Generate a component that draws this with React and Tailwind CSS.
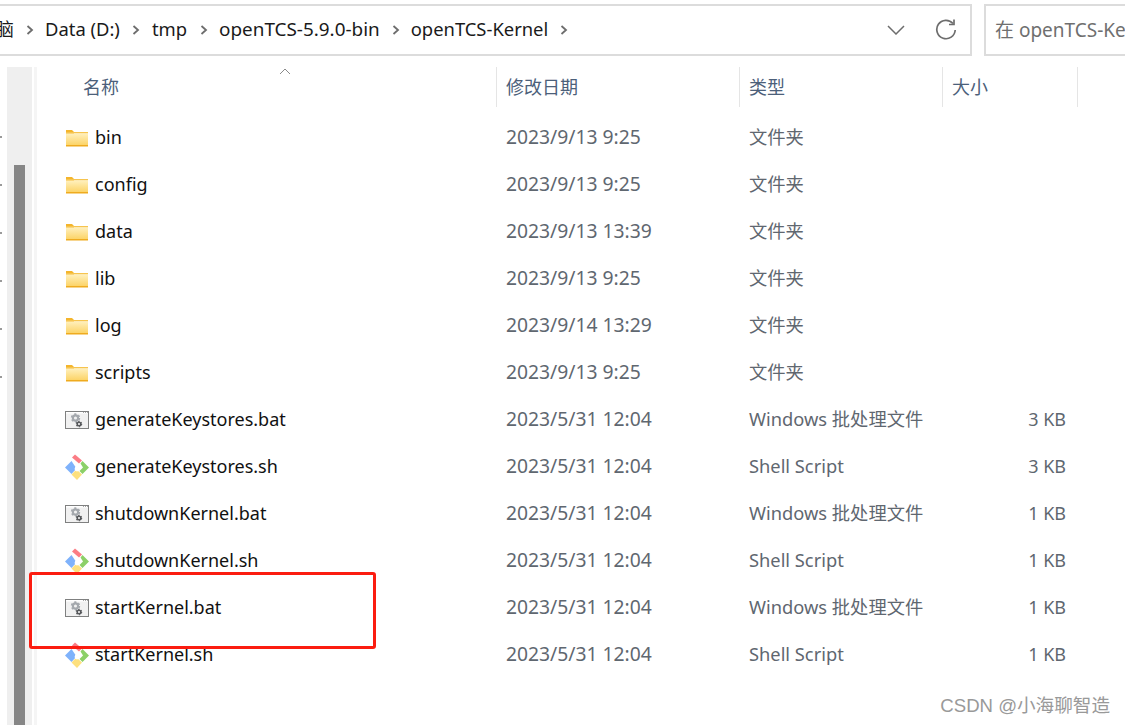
const FONT = "font-['Noto_Sans','Noto_Sans_CJK_SC',sans-serif]";

const rows = [
  ["bin", "2023/9/13 9:25", "文件夹", "", "folder"],
  ["config", "2023/9/13 9:25", "文件夹", "", "folder"],
  ["data", "2023/9/13 13:39", "文件夹", "", "folder"],
  ["lib", "2023/9/13 9:25", "文件夹", "", "folder"],
  ["log", "2023/9/14 13:29", "文件夹", "", "folder"],
  ["scripts", "2023/9/13 9:25", "文件夹", "", "folder"],
  ["generateKeystores.bat", "2023/5/31 12:04", "Windows 批处理文件", "3 KB", "bat"],
  ["generateKeystores.sh", "2023/5/31 12:04", "Shell Script", "3 KB", "git"],
  ["shutdownKernel.bat", "2023/5/31 12:04", "Windows 批处理文件", "1 KB", "bat"],
  ["shutdownKernel.sh", "2023/5/31 12:04", "Shell Script", "1 KB", "git"],
  ["startKernel.bat", "2023/5/31 12:04", "Windows 批处理文件", "1 KB", "bat"],
  ["startKernel.sh", "2023/5/31 12:04", "Shell Script", "1 KB", "git"],
];

function FolderIcon() {
  return (
    <svg width="24" height="18" viewBox="0 0 24 18">
      <defs>
        <linearGradient id="fg" x1="0" y1="0" x2="0" y2="1">
          <stop offset="0" stopColor="#fff0bd" />
          <stop offset="1" stopColor="#fcd468" />
        </linearGradient>
      </defs>
      <path d="M1 1 H7 L9 3 V5 H1 Z" fill="#f4b52c" />
      <rect x="1" y="3" width="22" height="1.5" fill="#f6c44e" />
      <rect x="1" y="4.5" width="22" height="11.5" fill="url(#fg)" />
      <rect x="1" y="16" width="22" height="1.5" fill="#efab1f" />
    </svg>
  );
}

function Gear({ cx, cy, r, color }) {
  return (
    <g>
      <circle cx={cx} cy={cy} r={r} fill="none" stroke={color} strokeWidth={r * 0.8} />
      <circle cx={cx} cy={cy} r={r * 1.5} fill="none" stroke={color} strokeWidth={r * 0.6} strokeDasharray={`${r * 0.8} ${r * 0.8}`} />
    </g>
  );
}

function BatIcon() {
  return (
    <svg width="24" height="18" viewBox="0 0 24 18">
      <rect x="0.5" y="0.5" width="23" height="17" fill="#f1f1f1" stroke="#7f8080" />
      <rect x="1" y="1" width="22" height="1.5" fill="#ffffff" />
      <path d="M18 1.5h5" stroke="#a9a9a9" strokeDasharray="1 1" />
      <Gear cx={10.5} cy={7} r={2.6} color="#a4a8ad" />
      <Gear cx={14} cy={13} r={1.8} color="#55575a" />
    </svg>
  );
}

function GitIcon() {
  return (
    <svg width="24" height="26" viewBox="0 0 24 26">
      <path d="M6.5 7 L0 13.5 L6.5 20 L11.5 14.5 Z" fill="#7fb2fb" />
      <path d="M6.5 20.5 L11.5 15.5 L17 20.5 L12 26 Z" fill="#fde07f" />
      <path d="M7 3.5 L10 0.5 L17 6.5 L14 9.5 Z" fill="#fb7d85" />
      <path d="M17.5 7 L24 13.5 L17.5 20 L14.5 17 L18 13.5 L15.5 9.5 Z" fill="#8cd068" />
      <circle cx="12" cy="15" r="2.4" fill="#ffffff" />
      <path d="M8.5 7 L12 12" stroke="#ffffff" strokeWidth="1.4" />
    </svg>
  );
}

function RowIcon({ kind }) {
  return (
    <span className="w-[30px] h-[26px] flex items-center justify-start shrink-0">
      {kind === "folder" && <FolderIcon />}
      {kind === "bat" && <BatIcon />}
      {kind === "git" && <GitIcon />}
    </span>
  );
}

function Chevron() {
  return (
    <svg width="8" height="12" viewBox="0 0 8 12" className="shrink-0">
      <path d="M1.5 2 L6 6 L1.5 10" fill="none" stroke="#6d6d6d" strokeWidth="1.8" />
    </svg>
  );
}

function HeaderCell({ children, className }) {
  return (
    <div className={`flex items-center h-[40px] border-r border-[#e5e5e5] text-[18px] text-[#4c607a] ${className}`}>
      {children}
    </div>
  );
}

export default function App() {
  return (
    <div className={`relative w-[1125px] h-[725px] overflow-hidden bg-white ${FONT}`}>
      <div className="flex h-[67px] pt-[4px] pb-[11px]">
        <div className="w-[972px] h-[52px] border-y-2 border-r-2 border-[#dcdcdc] flex items-center text-[18.4px] text-[#1a1a1a] shrink-0">
          <span className="w-[14px] -mt-[2px] overflow-hidden flex justify-end shrink-0">
            <span className="whitespace-nowrap">脑</span>
          </span>
          <span className="ml-[12px] flex items-center gap-[11px]">
            <Chevron />
            <span className="mr-[1px] -mt-[2px]">Data (D:)</span>
            <Chevron />
            <span className="mr-[2px] ml-[1px] -mt-[2px]">tmp</span>
            <Chevron />
            <span className="text-[18.9px] mr-[1px] -mt-[2px]">openTCS-5.9.0-bin</span>
            <Chevron />
            <span className="mr-[1px] -mt-[2px]">openTCS-Kernel</span>
            <Chevron />
          </span>
          <span className="ml-auto flex items-center gap-[30px] pr-[13px]">
            <svg width="18" height="10" viewBox="0 0 18 10">
              <path d="M1 1 L9 9 L17 1" fill="none" stroke="#6d6d6d" strokeWidth="1.5" />
            </svg>
            <svg width="22" height="22" viewBox="0 0 22 22">
              <path d="M18 4.5 A9.2 9.2 0 1 0 20.2 11" fill="none" stroke="#6d6d6d" strokeWidth="1.7" />
              <path d="M19 0.5 V5.5 H14" fill="none" stroke="#6d6d6d" strokeWidth="1.7" />
            </svg>
          </span>
        </div>
        <div className="ml-[12px] flex-1 h-[52px] border-y-2 border-l-2 border-[#dcdcdc] flex items-center pl-[9px] text-[19px] text-[#6f6f6f] whitespace-nowrap overflow-hidden">
          在 openTCS-Kernel
        </div>
      </div>

      <div className="flex h-[658px]">
        <div className="w-[7px] shrink-0 flex flex-col items-start pt-[69px] gap-[46px]">
          {[0, 1, 2, 3, 4, 5].map((i) => (
            <span key={i} className="w-[1.5px] h-[2px] bg-[#9a9a9a]" />
          ))}
        </div>
        <div className="w-[25px] shrink-0 bg-[#efefef] pt-[98px] flex justify-center">
          <div className="w-[11px] h-full bg-[#868686]" />
        </div>
        <div className="w-[3px] ml-[2px] shrink-0 bg-[#f5f5f5]" />
        <div className="flex-1 min-w-0">
          <div className="relative flex h-[40px]">
            <HeaderCell className="w-[460px] pl-[46px]">名称</HeaderCell>
            <span className="absolute left-[242px] top-[1px]">
              <svg width="12" height="7" viewBox="0 0 12 7">
                <path d="M1 6 L6 1 L11 6" fill="none" stroke="#8a8a8a" strokeWidth="1" />
              </svg>
            </span>
            <HeaderCell className="w-[243px] pl-[9px]">修改日期</HeaderCell>
            <HeaderCell className="w-[203px] pl-[9px]">类型</HeaderCell>
            <HeaderCell className="w-[135px] pl-[9px]">大小</HeaderCell>
          </div>
          <div className="pt-[7px]">
            {rows.map(([name, date, type, size, kind]) => (
              <div key={name} className="flex items-center h-[47px] text-[19px]">
                <div className="w-[460px] pl-[28px] flex items-center text-[#111111] text-[18px]">
                  <RowIcon kind={kind} />
                  <span>{name}</span>
                </div>
                <div className="w-[243px] pl-[9px] text-[#5f6770] text-[19.3px]">{date}</div>
                <div className="w-[203px] pl-[9px] text-[#5f6770] text-[18.3px] leading-[26px] -mt-[2px]">{type}</div>
                <div className="w-[123px] text-right text-[#5f6770] text-[18px]">{size}</div>
              </div>
            ))}
          </div>
        </div>
      </div>

      <div className="absolute left-[29px] top-[572px] w-[347px] h-[77px] border-[3px] border-[#fb1c10] rounded-[3px]" />
      <div className="absolute right-[15px] top-[692px] text-[18.6px] leading-[28px] text-[#999999] whitespace-nowrap font-['Liberation_Sans','Noto_Sans_CJK_SC',sans-serif]">
        CSDN @小海聊智造
      </div>
    </div>
  );
}
